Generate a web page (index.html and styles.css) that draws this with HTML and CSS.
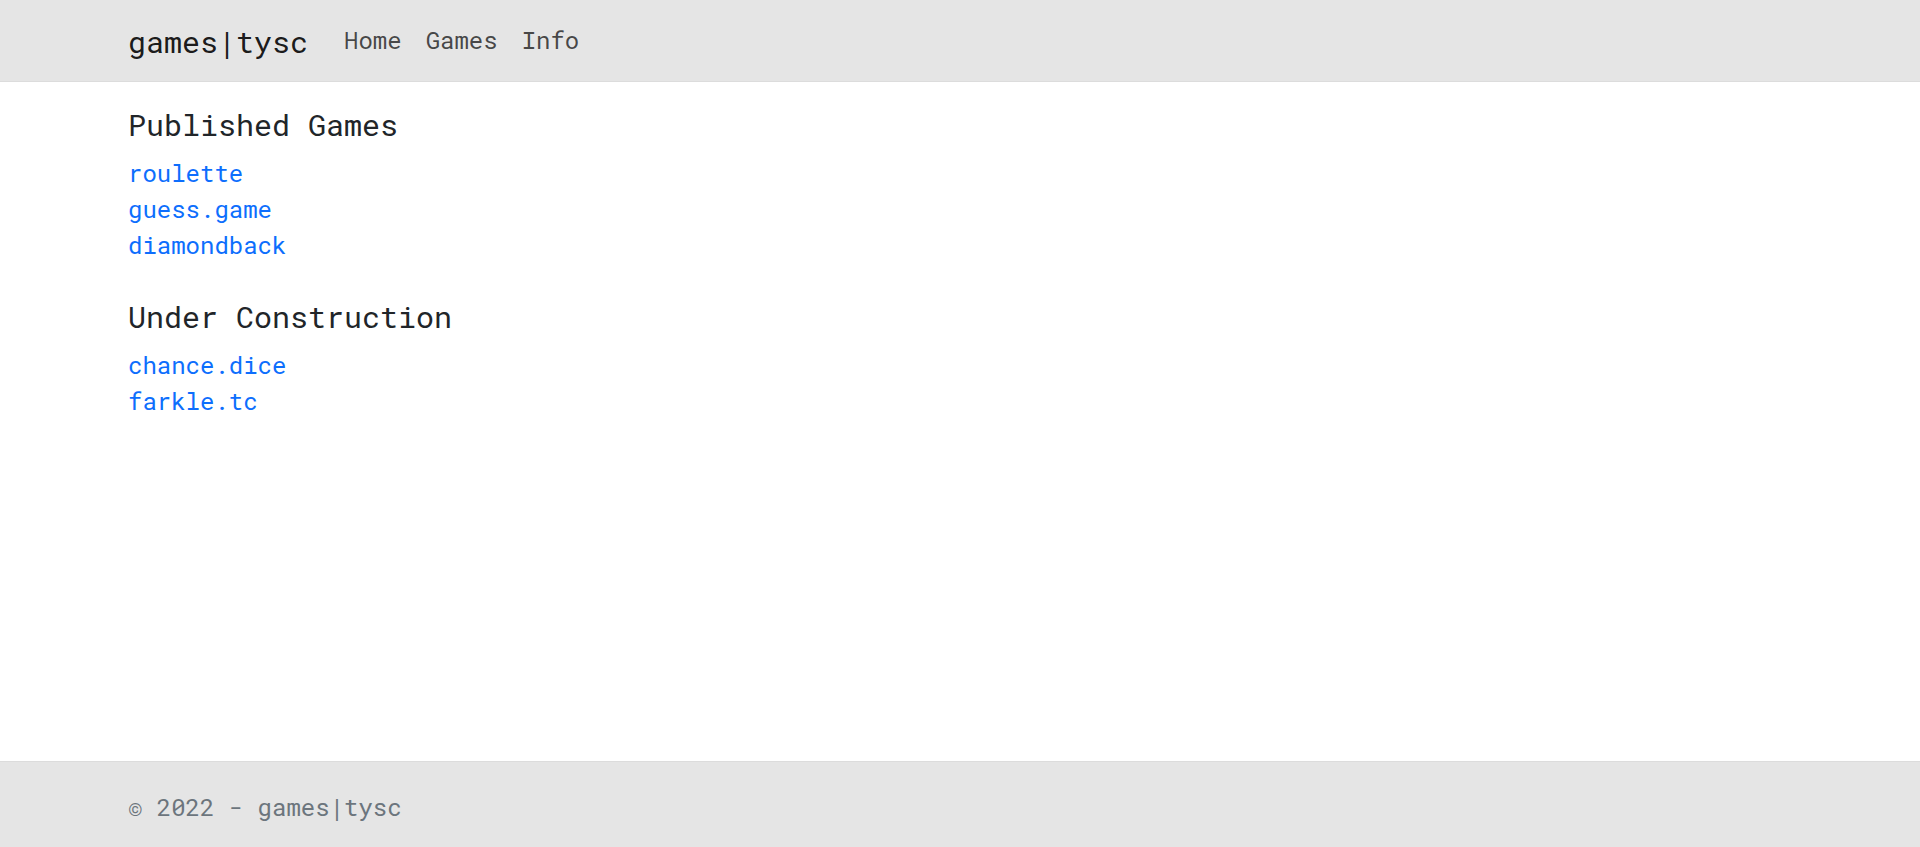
FILE: index.html
```html
<!DOCTYPE html>
<html lang="en">
<head>
<meta charset="utf-8">
<title>games|tysc</title>
<link rel="stylesheet" href="styles.css">
</head>
<body>
<div class="page">
  <header class="navbar">
    <div class="wrap nav-inner">
      <a class="brand" href="#">games|tysc</a>
      <nav class="nav">
        <a class="nav-link" href="#">Home</a>
        <a class="nav-link" href="#">Games</a>
        <a class="nav-link" href="#">Info</a>
      </nav>
    </div>
  </header>
  <main class="wrap main">
    <section class="group">
      <h2 class="title">Published Games</h2>
      <ul class="list">
        <li><a href="#">roulette</a></li>
        <li><a href="#">guess.game</a></li>
        <li><a href="#">diamondback</a></li>
      </ul>
    </section>
    <section class="group">
      <h2 class="title">Under Construction</h2>
      <ul class="list">
        <li><a href="#">chance.dice</a></li>
        <li><a href="#">farkle.tc</a></li>
      </ul>
    </section>
  </main>
  <footer class="footer">
    <div class="wrap foot-inner">© 2022 - games|tysc</div>
  </footer>
</div>
</body>
</html>
```
FILE: styles.css
```css
* { box-sizing: border-box; }
html, body { margin: 0; padding: 0; }
body {
  font-family: "Roboto Mono", "DejaVu Sans Mono", "Liberation Mono", monospace;
  font-size: 24px;
  line-height: 1.5;
  color: #212529;
  background: #fff;
}
.page {
  min-height: 847px;
  display: flex;
  flex-direction: column;
}
.wrap { padding-left: 128px; padding-right: 128px; }
.navbar {
  background: #e5e5e5;
  border-bottom: 1px solid #dcdcdc;
  height: 82px;
  padding-top: 20px;
}
.nav-inner { display: flex; align-items: flex-start; width: 100%; }
.brand {
  font-size: 30px;
  color: rgba(0,0,0,.9);
  text-decoration: none;
  margin-right: 24px;
  margin-top: -1px;
  line-height: 45px;
}
.nav { display: flex; margin-top: 2px; }
.nav-link {
  color: rgba(0,0,0,.7);
  text-decoration: none;
  padding: 0 12px;
  line-height: 36px;
}
.main { flex: 1; padding-top: 25px; }
.title {
  font-size: 30px;
  font-weight: 400;
  line-height: 1.2;
  margin: 0 0 12px;
}
.list { list-style: none; margin: 0 0 36px; padding: 0; }
.list a { color: #0d6efd; text-decoration: none; }
.footer {
  background: #e5e5e5;
  border-top: 1px solid #dcdcdc;
  height: 86px;
  padding-top: 27px;
  color: #6c757d;
}
```
